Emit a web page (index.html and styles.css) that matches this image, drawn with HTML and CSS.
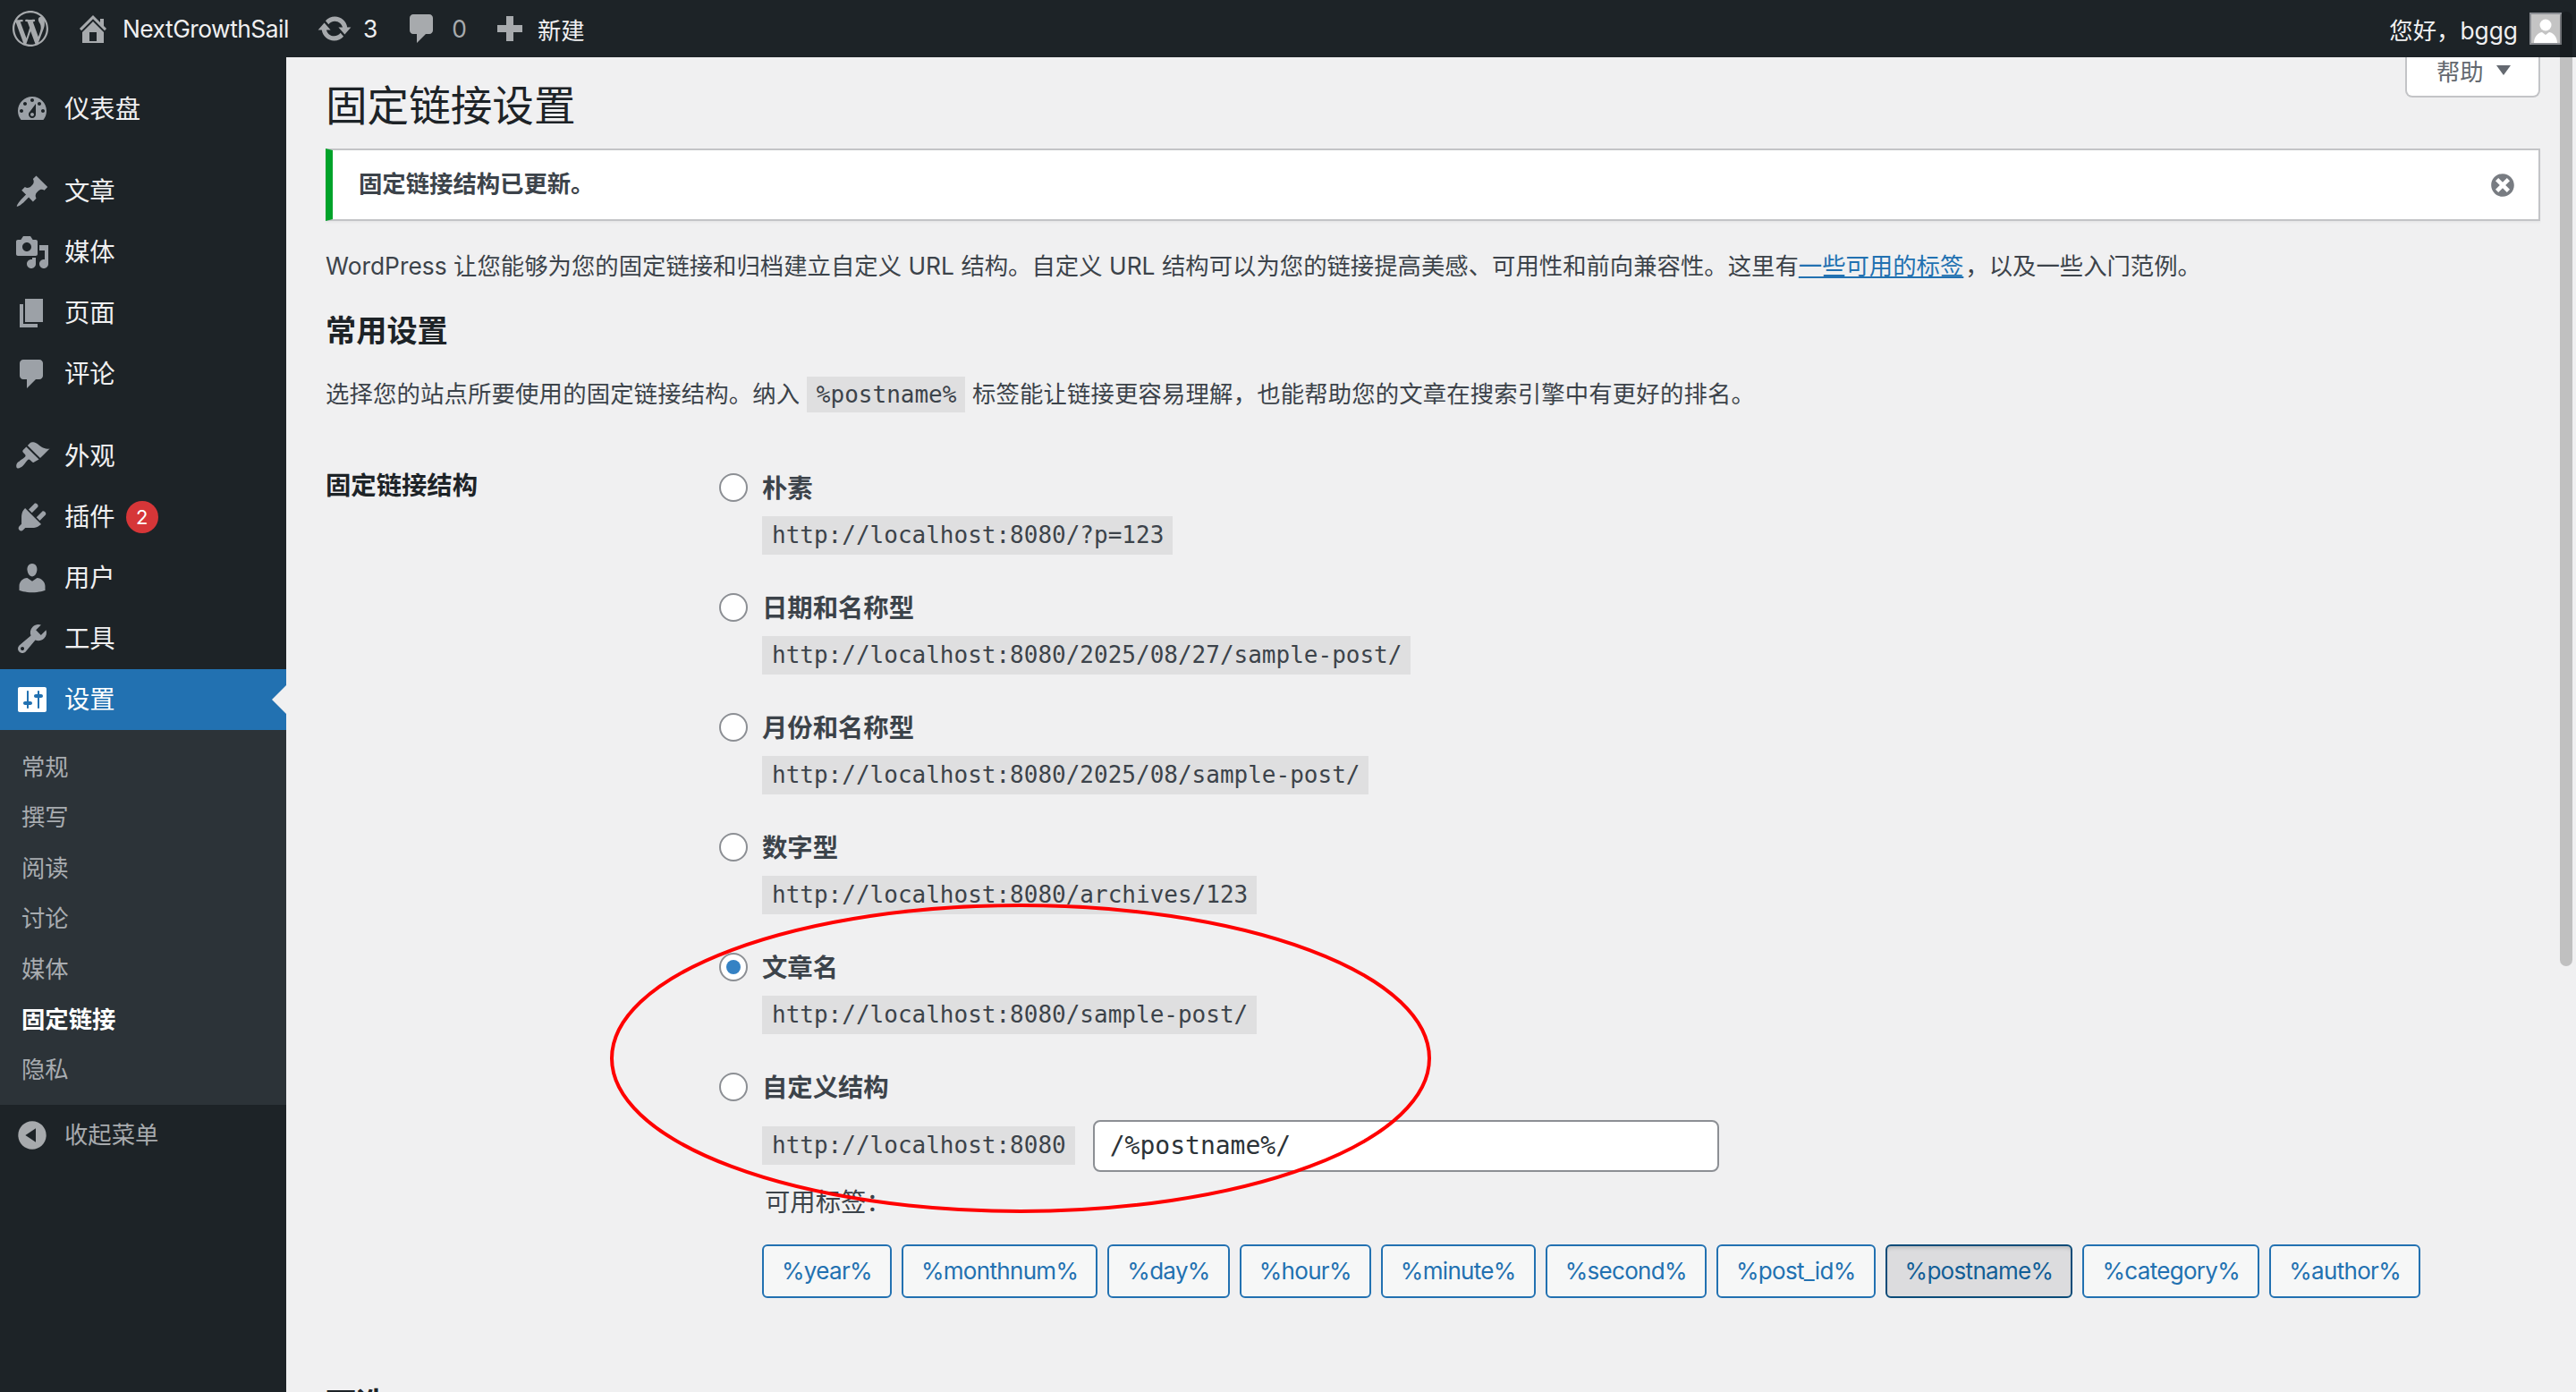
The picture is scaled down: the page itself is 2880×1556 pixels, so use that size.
FILE: index.html
```html
<!DOCTYPE html>
<html lang="zh-CN">
<head>
    <meta charset="UTF-8">
    <title>固定链接设置</title>
    <link rel="stylesheet" href="styles.css">
</head>
<body>
    <header class="adminbar">
        <div class="bar-left">
            <svg class="bar-logo" viewBox="0 0 20 20"><path d="M20 10c0-5.51-4.49-10-10-10C4.48 0 0 4.49 0 10c0 5.52 4.48 10 10 10 5.51 0 10-4.48 10-10zM7.78 15.37L4.37 6.22c.55-.02 1.17-.08 1.17-.08.5-.06.44-1.13-.06-1.11 0 0-1.45.11-2.37.11-.18 0-.37 0-.58-.01C4.12 2.69 6.87 1.11 10 1.11c2.33 0 4.45.87 6.05 2.34-.68-.11-1.65.39-1.65 1.58 0 .74.45 1.36.9 2.1.35.61.55 1.36.55 2.46 0 1.49-1.4 5-1.4 5l-3.03-8.37c.54-.02.82-.17.82-.17.5-.05.44-1.25-.06-1.22 0 0-1.44.12-2.38.12-.87 0-2.33-.12-2.33-.12-.5-.03-.56 1.2-.06 1.22l.92.08 1.26 3.41zM17.41 10c.24-.64.74-1.87.43-4.25.7 1.29 1.05 2.71 1.05 4.25 0 3.29-1.73 6.24-4.4 7.78.97-2.59 1.94-5.2 2.92-7.78zM6.1 18.09C3.12 16.65 1.11 13.53 1.11 10c0-1.3.23-2.48.72-3.59C3.25 10.3 4.67 14.2 6.1 18.09zm4.03-6.63l2.58 6.98c-.86.29-1.76.45-2.71.45-.79 0-1.57-.11-2.29-.33.81-2.38 1.62-4.74 2.42-7.1z"/></svg>
            <svg class="bar-icon home" viewBox="0 0 20 20"><path d="M16 8.5l1.53 1.53-1.06 1.06L10 4.62l-6.47 6.47-1.06-1.06L10 2.5l4 4v-2h2v4zm-6-2.46l6 5.99V18H4v-5.97zM12 17v-5H8v5h4z"/></svg>
            <span class="site-name">NextGrowthSail</span>
            <svg class="bar-icon updates" viewBox="0 0 20 20"><path d="M10.2 3.28c3.53 0 6.43 2.61 6.92 6h2.08l-3.5 4-3.5-4h2.32c-.45-1.97-2.21-3.45-4.32-3.45-1.45 0-2.73.71-3.54 1.78L4.95 5.66C6.23 4.2 8.11 3.28 10.2 3.28zm-.4 13.44c-3.52 0-6.43-2.61-6.92-6H.8l3.5-4c1.17 1.33 2.33 2.67 3.5 4H5.48c.45 1.97 2.21 3.45 4.32 3.45 1.45 0 2.73-.71 3.54-1.78l1.71 1.95c-1.28 1.46-3.15 2.38-5.25 2.38z"/></svg>
            <span class="update-count">3</span>
            <svg class="bar-icon comments" viewBox="0 0 20 20"><path d="M5 2h9c1.1 0 2 .9 2 2v7c0 1.1-.9 2-2 2h-2l-5 5v-5H5c-1.1 0-2-.9-2-2V4c0-1.1.9-2 2-2z"/></svg>
            <span class="comment-count">0</span>
            <svg class="bar-icon plus" viewBox="0 0 20 20"><path d="M17 8v4h-5v5H8v-5H3V8h5V3h4v5h5z"/></svg>
            <span class="new-item">新建</span>
        </div>
        <div class="bar-right">
            <span>您好，bggg</span>
            <svg class="avatar" viewBox="0 0 36 36"><rect width="36" height="36" fill="#8c8f94"/><rect x="2" y="2" width="32" height="32" fill="#c4c4c4"/><circle cx="18" cy="14" r="6.5" fill="#fff"/><path d="M5 34c0-8 6-12 9-12l4 3 4-3c3 0 9 4 9 12z" fill="#fff"/></svg>
        </div>
    </header>

    <div class="layout">
        <nav class="sidebar">
            <ul class="menu">
                <li class="menu-item">
                    <svg class="menu-icon" viewBox="0 0 20 20"><path d="M3.76 16h12.48c1.1-1.37 1.76-3.11 1.76-5 0-4.42-3.58-8-8-8s-8 3.58-8 8c0 1.89.66 3.63 1.76 5zM10 4c.55 0 1 .45 1 1s-.45 1-1 1-1-.45-1-1 .45-1 1-1zM6 6c.55 0 1 .45 1 1s-.45 1-1 1-1-.45-1-1 .45-1 1-1zm8 0c.55 0 1 .45 1 1s-.45 1-1 1-1-.45-1-1 .45-1 1-1zm-5.37 5.55L12 7v6c0 1.1-.9 2-2 2s-2-.9-2-2c0-.57.24-1.08.63-1.45zM4 10c.55 0 1 .45 1 1s-.45 1-1 1-1-.45-1-1 .45-1 1-1zm12 0c.55 0 1 .45 1 1s-.45 1-1 1-1-.45-1-1 .45-1 1-1zm-5 3c0-.55-.45-1-1-1s-1 .45-1 1 .45 1 1 1 1-.45 1-1z"/></svg>
                    <span class="menu-text">仪表盘</span>
                </li>
                <li class="menu-sep"></li>
                <li class="menu-item">
                    <svg class="menu-icon" viewBox="0 0 20 20"><path d="M10.44 3.02l1.82-1.82 6.36 6.35-1.83 1.82c-1.05-.68-2.48-.57-3.41.36l-.75.75c-.92.93-1.04 2.35-.35 3.41l-1.83 1.82-2.41-2.41-2.8 2.79c-.42.42-3.38 2.71-3.8 2.29s1.86-3.39 2.28-3.81l2.79-2.79L4.1 9.36l1.83-1.82c1.05.69 2.48.57 3.4-.36l.75-.75c.93-.92 1.05-2.35.36-3.41z"/></svg>
                    <span class="menu-text">文章</span>
                </li>
                <li class="menu-item">
                    <svg class="menu-icon" viewBox="0 0 20 20"><path d="M13 11V4c0-.55-.45-1-1-1h-1.67L9 1H5L3.67 3H2c-.55 0-1 .45-1 1v7c0 .55.45 1 1 1h10c.55 0 1-.45 1-1zM7 4.5c1.38 0 2.5 1.12 2.5 2.5S8.38 9.5 7 9.5 4.5 8.38 4.5 7 5.62 4.5 7 4.5zM14 6h5v10.5c0 1.38-1.12 2.5-2.5 2.5S14 17.88 14 16.5s1.12-2.5 2.5-2.5c.17 0 .34.02.5.05V9h-3V6zm-4 8.05V13h2v3.5c0 1.38-1.12 2.5-2.5 2.5S7 17.88 7 16.5 8.12 14 9.5 14c.17 0 .34.02.5.05z"/></svg>
                    <span class="menu-text">媒体</span>
                </li>
                <li class="menu-item">
                    <svg class="menu-icon" viewBox="0 0 20 20"><path d="M6 15V2h10v13H6zm-1 1h8v2H3V5h2v11z"/></svg>
                    <span class="menu-text">页面</span>
                </li>
                <li class="menu-item">
                    <svg class="menu-icon" viewBox="0 0 20 20"><path d="M5 2h9c1.1 0 2 .9 2 2v7c0 1.1-.9 2-2 2h-2l-5 5v-5H5c-1.1 0-2-.9-2-2V4c0-1.1.9-2 2-2z"/></svg>
                    <span class="menu-text">评论</span>
                </li>
                <li class="menu-sep"></li>
                <li class="menu-item">
                    <svg class="menu-icon" viewBox="0 0 20 20"><path d="M14.48 11.06L7.41 3.99l1.5-1.5c.5-.56 2.3-.47 3.51.32 1.21.8 1.43 1.28 2.91 2.1 1.18.64 2.45 1.26 4.45.85zm-.71.71L6.7 4.7 4.93 6.47c-.39.39-.39 1.02 0 1.41l1.06 1.06c.39.39.39 1.03 0 1.42-.6.6-1.43 1.11-2.21 1.69-.35.26-.7.53-1.01.84C1.43 13.23.78 15.08 1.25 16.19c.46 1.11 2.31.46 3.65-.88.31-.31.58-.66.84-1.01.58-.78 1.09-1.61 1.69-2.21.39-.39 1.03-.39 1.42 0l1.06 1.06c.39.39 1.02.39 1.41 0z"/></svg>
                    <span class="menu-text">外观</span>
                </li>
                <li class="menu-item">
                    <svg class="menu-icon" viewBox="0 0 20 20"><path d="M13.11 4.36L9.87 7.6 8 5.73l3.24-3.24c.35-.34 1.05-.2 1.56.32.52.51.66 1.21.31 1.55zm-8 1.77l.91-1.12 9.01 9.01-1.19.84c-.71.71-2.63 1.16-3.82 1.16H6.14L4.9 17.26c-.59.59-1.54.59-2.12 0-.59-.58-.59-1.53 0-2.12l1.24-1.24v-3.88c0-1.13.4-3.19 1.09-3.89zm7.26 3.97l3.24-3.24c.34-.35 1.04-.21 1.55.31.52.51.66 1.21.31 1.55l-3.24 3.25z"/></svg>
                    <span class="menu-text">插件</span>
                    <span class="badge">2</span>
                </li>
                <li class="menu-item">
                    <svg class="menu-icon" viewBox="0 0 20 20"><path d="M10 9.25c-2.27 0-2.73-3.44-2.73-3.44C7 4.02 7.82 2 9.97 2c2.16 0 2.98 2.02 2.71 3.81 0 0-.41 3.44-2.68 3.44zm0 2.57L12.72 10c2.39 0 4.52 2.33 4.52 4.53v2.49s-3.65 1.13-7.24 1.13c-3.65 0-7.24-1.13-7.24-1.13v-2.49c0-2.25 1.94-4.48 4.47-4.48z"/></svg>
                    <span class="menu-text">用户</span>
                </li>
                <li class="menu-item">
                    <svg class="menu-icon" viewBox="0 0 20 20"><path d="M16.68 9.77c-1.34 1.34-3.3 1.67-4.95.99l-5.41 6.52c-.99.99-2.59.99-3.58 0s-.99-2.59 0-3.57l6.52-5.42c-.68-1.65-.35-3.61.99-4.95 1.28-1.28 3.12-1.62 4.72-1.06l-2.89 2.89 2.82 2.82 2.86-2.87c.53 1.58.18 3.39-1.08 4.65zM3.81 16.21c.4.39 1.04.39 1.43 0 .4-.4.4-1.04 0-1.43-.39-.4-1.03-.4-1.43 0-.39.39-.39 1.03 0 1.43z"/></svg>
                    <span class="menu-text">工具</span>
                </li>
                <li class="menu-item current">
                    <svg class="menu-icon" viewBox="0 0 20 20"><path d="M18 16V4c0-.55-.45-1-1-1H3c-.55 0-1 .45-1 1v12c0 .55.45 1 1 1h14c.55 0 1-.45 1-1zM8 11h1c.55 0 1 .45 1 1s-.45 1-1 1H8v1.5c0 .28-.22.5-.5.5s-.5-.22-.5-.5V13H6c-.55 0-1-.45-1-1s.45-1 1-1h1V5.5c0-.28.22-.5.5-.5s.5.22.5.5V11zm5-2h-1c-.55 0-1-.45-1-1s.45-1 1-1h1V5.5c0-.28.22-.5.5-.5s.5.22.5.5V7h1c.55 0 1 .45 1 1s-.45 1-1 1h-1v5.5c0 .28-.22.5-.5.5s-.5-.22-.5-.5V9z"/></svg>
                    <span class="menu-text">设置</span>
                </li>
            </ul>
            <ul class="submenu">
                <li>常规</li>
                <li>撰写</li>
                <li>阅读</li>
                <li>讨论</li>
                <li>媒体</li>
                <li class="active">固定链接</li>
                <li>隐私</li>
            </ul>
            <div class="collapse">
                <svg class="menu-icon" viewBox="0 0 20 20"><path d="M10 2.16c4.33 0 7.84 3.51 7.84 7.84s-3.51 7.84-7.84 7.84S2.16 14.33 2.16 10 5.71 2.16 10 2.16zm2 11.72V6.12L6.18 9.97z"/></svg>
                <span class="menu-text">收起菜单</span>
            </div>
        </nav>

        <main class="content">
            <div class="help-tab">帮助<span class="help-arrow"></span></div>
            <h1>固定链接设置</h1>

            <div class="notice">
                <strong>固定链接结构已更新。</strong>
                <svg class="notice-close" viewBox="0 0 20 20"><path d="M10 2c4.42 0 8 3.58 8 8s-3.58 8-8 8-8-3.58-8-8 3.58-8 8-8zm5 11l-3-3 3-3-2-2-3 3-3-3-2 2 3 3-3 3 2 2 3-3 3 3z"/></svg>
            </div>

            <p class="intro">WordPress 让您能够为您的固定链接和归档建立自定义 URL 结构。自定义 URL 结构可以为您的链接提高美感、可用性和前向兼容性。这里有<a href="#">一些可用的标签</a>，以及一些入门范例。</p>

            <h2>常用设置</h2>
            <p class="lead">选择您的站点所要使用的固定链接结构。纳入 <code>%postname%</code> 标签能让链接更容易理解，也能帮助您的文章在搜索引擎中有更好的排名。</p>

            <div class="structure">
                <div class="structure-title">固定链接结构</div>
                <div class="structure-options">
                    <div class="option">
                        <label class="option-label"><span class="radio"></span><span class="option-text">朴素</span></label>
                        <code>http://localhost:8080/?p=123</code>
                    </div>
                    <div class="option">
                        <label class="option-label"><span class="radio"></span><span class="option-text">日期和名称型</span></label>
                        <code>http://localhost:8080/2025/08/27/sample-post/</code>
                    </div>
                    <div class="option">
                        <label class="option-label"><span class="radio"></span><span class="option-text">月份和名称型</span></label>
                        <code>http://localhost:8080/2025/08/sample-post/</code>
                    </div>
                    <div class="option">
                        <label class="option-label"><span class="radio"></span><span class="option-text">数字型</span></label>
                        <code>http://localhost:8080/archives/123</code>
                    </div>
                    <div class="option">
                        <label class="option-label"><span class="radio checked"></span><span class="option-text">文章名</span></label>
                        <code>http://localhost:8080/sample-post/</code>
                    </div>
                    <div class="option custom">
                        <label class="option-label"><span class="radio"></span><span class="option-text">自定义结构</span></label>
                        <div class="custom-row">
                            <code>http://localhost:8080</code>
                            <div class="custom-input">/%postname%/</div>
                        </div>
                        <div class="tags-title">可用标签：</div>
                        <div class="tags">
                            <span class="tag">%year%</span>
                            <span class="tag">%monthnum%</span>
                            <span class="tag">%day%</span>
                            <span class="tag">%hour%</span>
                            <span class="tag">%minute%</span>
                            <span class="tag">%second%</span>
                            <span class="tag">%post_id%</span>
                            <span class="tag active">%postname%</span>
                            <span class="tag">%category%</span>
                            <span class="tag">%author%</span>
                        </div>
                    </div>
                </div>
            </div>

            <h2 class="optional">可选</h2>
        </main>
    </div>

    <!-- hand drawn annotation over the page -->
    <svg class="annotation" viewBox="0 0 920 350"><ellipse cx="460" cy="175" rx="457" ry="171"/></svg>
    <div class="scroll-thumb"></div>
</body>
</html>
```

FILE: styles.css
```css
* {
    box-sizing: border-box;
}
html, body {
    height: 100%;
}
body {
    margin: 0;
    height: 1556px;
    overflow: hidden;
    position: relative;
    background-color: #f0f0f1;
    color: #3c434a;
    font-family: Inter, "Noto Sans CJK SC", sans-serif;
    font-size: 26.35px;
}
ul {
    margin: 0;
    padding: 0;
    list-style: none;
}

/* top bar */
.adminbar {
    height: 64px;
    background-color: #1d2327;
    color: #f0f0f1;
    display: flex;
    justify-content: space-between;
    align-items: center;
    padding: 0 16px 0 14px;
}
.bar-left, .bar-right {
    display: flex;
    align-items: center;
}
.bar-logo {
    width: 40px;
    height: 40px;
    fill: #a7aaad;
    margin-right: 30px;
}
.bar-icon {
    width: 40px;
    height: 40px;
    fill: #a7aaad;
    flex: none;
}
.home {
    margin-right: 13px;
}
.site-name {
    width: 186px;
    margin-right: 31px;
    white-space: nowrap;
    letter-spacing: -0.5px;
}
.updates {
    margin-right: 12px;
}
.update-count {
    margin-right: 30px;
}
.comments {
    margin-right: 13px;
}
.comment-count {
    color: #a7aaad;
    margin-right: 28px;
}
.plus {
    margin-right: 11px;
}
.avatar {
    width: 36px;
    height: 36px;
    margin-left: 13px;
}

/* sidebar */
.layout {
    display: flex;
    height: 1492px;
}
.sidebar {
    width: 320px;
    flex: none;
    background-color: #1d2327;
    padding-top: 24px;
    color: #f0f0f1;
}
.menu-item {
    height: 68px;
    display: flex;
    align-items: center;
    font-size: 28.35px;
    padding-left: 16px;
    position: relative;
}
.menu-text {
    margin-top: -5px;
}
.menu-icon {
    width: 40px;
    height: 40px;
    fill: #9ca1a7;
    margin-right: 16px;
    flex: none;
}
.menu-sep {
    height: 24px;
}
.badge {
    width: 36px;
    height: 36px;
    border-radius: 50%;
    background-color: #d63638;
    color: #fff;
    font-size: 22px;
    margin-left: 12px;
    display: flex;
    align-items: center;
    justify-content: center;
}
.menu-item.current {
    background-color: #2271b1;
    color: #fff;
}
.menu-item.current .menu-icon {
    fill: #fff;
}
.menu-item.current::after {
    content: "";
    position: absolute;
    right: 0;
    top: 18px;
    border: 16px solid transparent;
    border-right-color: #f0f0f1;
    border-left-width: 0;
}
.submenu {
    background-color: #2c3338;
    padding: 13px 0 9px 24px;
    height: 419px;
    color: #a8acb0;
}
.submenu li {
    height: 56.4px;
    line-height: 56.4px;
}
.submenu .active {
    color: #fff;
    font-weight: 600;
}
.collapse {
    height: 68px;
    display: flex;
    align-items: center;
    padding-left: 16px;
    color: #a7aaad;
}
.collapse .menu-icon {
    fill: #a7aaad;
}

/* main */
.content {
    flex: 1;
    min-width: 0;
    padding: 25px 40px 0 44px;
    position: relative;
}
.help-tab {
    position: absolute;
    top: 0;
    right: 40px;
    width: 151px;
    height: 45px;
    background-color: #fff;
    border: 2px solid #c3c4c7;
    border-top: none;
    border-radius: 0 0 8px 8px;
    color: #646970;
    display: flex;
    align-items: center;
    padding: 0 0 14px 33px;
}
.help-arrow {
    margin-left: 14px;
    border: 8px solid transparent;
    border-top: 11px solid #646970;
    border-bottom: none;
}
h1 {
    margin: 0;
    font-size: 46.6px;
    line-height: 58px;
    font-weight: 400;
    color: #1d2327;
}
.notice {
    margin-top: 19px;
    height: 81px;
    background-color: #fff;
    border: 2px solid #c3c4c7;
    border-left: 8px solid #00a32a;
    box-shadow: 0 2px 2px rgba(0,0,0,0.04);
    display: flex;
    align-items: center;
    justify-content: space-between;
    padding: 0 24px 0 29px;
}
.notice strong {
    font-weight: 600;
    margin-top: -6px;
}
.notice-close {
    width: 32px;
    height: 32px;
    fill: #787c82;
}
p {
    margin: 0;
    line-height: 36.4px;
}
.intro {
    margin-top: 32px;
    letter-spacing: 0.02px;
}
.intro a {
    color: #2271b1;
    margin-right: 2px;
}
h2 {
    margin: 33px 0 0;
    font-size: 34.2px;
    line-height: 44px;
    font-weight: 600;
    color: #1d2327;
}
.lead {
    margin-top: 30px;
    letter-spacing: 0.17px;
}
code {
    font-family: "DejaVu Sans Mono", monospace;
    font-size: 26px;
    line-height: 33px;
    letter-spacing: 0;
    padding: 5px 10px 5px 11px;
    background-color: rgba(0,0,0,0.07);
    color: #3c434a;
}
.structure {
    display: flex;
    margin-top: 70px;
}
.structure-title {
    width: 440px;
    flex: none;
    font-size: 28.35px;
    font-weight: 600;
    line-height: 28px;
    color: #1d2327;
}
.option {
    height: 134px;
}
.option code {
    display: inline-block;
    margin-left: 48px;
}
.option-label {
    display: flex;
    align-items: center;
    height: 32px;
    font-size: 28.35px;
    font-weight: 600;
    margin-bottom: 16px;
}
.option-text {
    margin-top: -3px;
}
.radio {
    width: 32px;
    height: 32px;
    margin-right: 16px;
    border: 2px solid #8c8f94;
    border-radius: 50%;
    background-color: #fff;
    flex: none;
    position: relative;
}
.radio.checked::before {
    content: "";
    position: absolute;
    left: 6px;
    top: 6px;
    width: 16px;
    height: 16px;
    border-radius: 50%;
    background-color: #3582c4;
}
.option.custom {
    height: auto;
}
.custom .option-label {
    margin-bottom: 21px;
}
.custom-row {
    display: flex;
    align-items: center;
    padding-left: 48px;
}
.custom-row code {
    margin-left: 0;
}
.custom-input {
    width: 700px;
    height: 58px;
    margin-left: 20px;
    padding-left: 17px;
    background-color: #fff;
    border: 2px solid #8c8f94;
    border-radius: 8px;
    font-family: "DejaVu Sans Mono", monospace;
    font-size: 28px;
    line-height: 54px;
    color: #2c3338;
}
.tags-title {
    margin: 14px 0 0 51px;
    font-size: 28.35px;
    line-height: 40px;
}
.tags {
    display: flex;
    gap: 11px;
    margin: 27px 0 0 48px;
}
.tag {
    height: 60px;
    line-height: 56px;
    padding: 0 20px;
    background-color: #f6f7f7;
    border: 2px solid #2271b1;
    border-radius: 6px;
    color: #2271b1;
    font-size: 26px;
    letter-spacing: -0.68px;
}
.tag.active {
    background-color: #dcdcde;
    border-color: #0a4b78;
    color: #135e96;
    box-shadow: inset 0 4px 4px -2px rgba(0,0,0,0.15);
}
h2.optional {
    margin-top: 96px;
}

/* overlays */
.annotation {
    position: absolute;
    left: 681px;
    top: 1008px;
    width: 920px;
    height: 350px;
    fill: none;
    stroke: #f00;
    stroke-width: 4px;
}
.scroll-thumb {
    position: absolute;
    left: 2862px;
    top: 13px;
    width: 14px;
    height: 1067px;
    border-radius: 7px;
    background-color: rgba(0,0,0,0.2);
}
```
